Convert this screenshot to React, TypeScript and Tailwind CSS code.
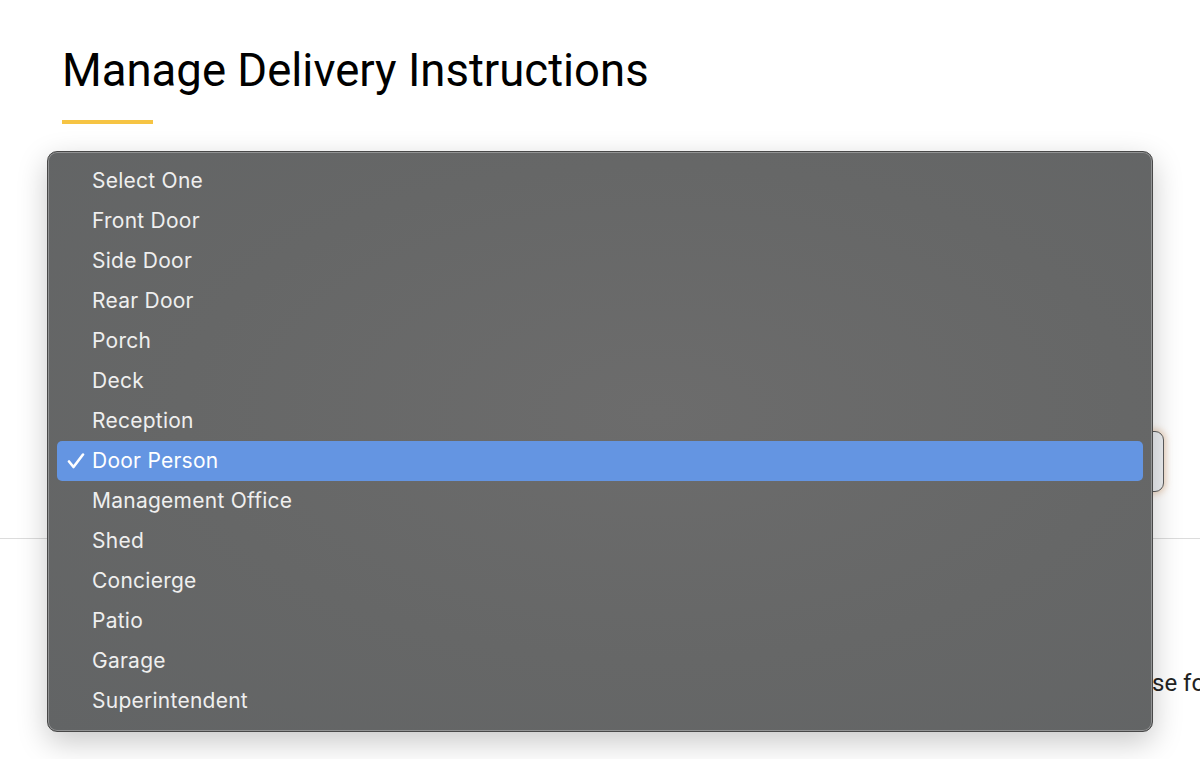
import { useState } from 'react';

const LOCATIONS = [
  'Select One',
  'Front Door',
  'Side Door',
  'Rear Door',
  'Porch',
  'Deck',
  'Reception',
  'Door Person',
  'Management Office',
  'Shed',
  'Concierge',
  'Patio',
  'Garage',
  'Superintendent',
];

export default function App() {
  const [selected, setSelected] = useState('Door Person');

  return (
    <div className="relative w-[1200px] h-[759px] overflow-hidden bg-white font-['Roboto',sans-serif] text-black">
      <main className="pt-[48px]">
        <div className="px-[62px]">
          <h1 className="text-[45.5px] leading-none font-normal">Manage Delivery Instructions</h1>
          <div className="mt-[26px] w-[91px] h-[4px] bg-[#f6c443]" />
        </div>

        {/* form that sits under the open menu */}
        <div className="mt-[307px] pl-[62px] pr-[36px]">
          <div className="h-[61px] rounded-[9px] border border-[#5d5d5d] bg-[#eceef1] shadow-[0_0_6px_2px_rgba(214,160,110,0.45)] px-5 flex items-center text-[20px]">
            {selected}
          </div>
        </div>

        <div className="mt-[46px] border-t border-[#dcdcdc]" />

        <p className="mt-[132px] whitespace-nowrap text-[24px] leading-none text-[#222]">
          <span className="inline-block w-[1152px]" />
          se for any special instructions
        </p>
      </main>

      {/* native select popup */}
      <div className="absolute left-[47px] top-[151px] w-[1106px] h-[581px] rounded-[10px] border border-[#484848] bg-[radial-gradient(ellipse_at_55%_45%,#6c6c6c_0%,#666767_55%,#626465_100%)] shadow-[inset_0_0_0_1px_rgba(255,255,255,0.3),0_10px_30px_rgba(0,0,0,0.22)] px-[9px] py-[9px] font-['Inter',sans-serif]">
        <ul>
          {LOCATIONS.map((loc) => (
            <li
              key={loc}
              onClick={() => setSelected(loc)}
              className={`relative h-[40px] flex items-center pl-[35px] rounded-[5px] text-[21px] tracking-[0.25px] ${
                selected === loc ? 'bg-[#6495e2] text-white' : 'text-[#efefef]'
              }`}
            >
              {selected === loc && (
                <svg className="absolute left-[10px] top-[12px]" width="18" height="16" viewBox="0 0 18 16">
                  <path d="M2 8.5 L6.5 14 L16 1.5" fill="none" stroke="white" strokeWidth="2.6" strokeLinecap="round" strokeLinejoin="round" />
                </svg>
              )}
              {loc}
            </li>
          ))}
        </ul>
      </div>
    </div>
  );
}
